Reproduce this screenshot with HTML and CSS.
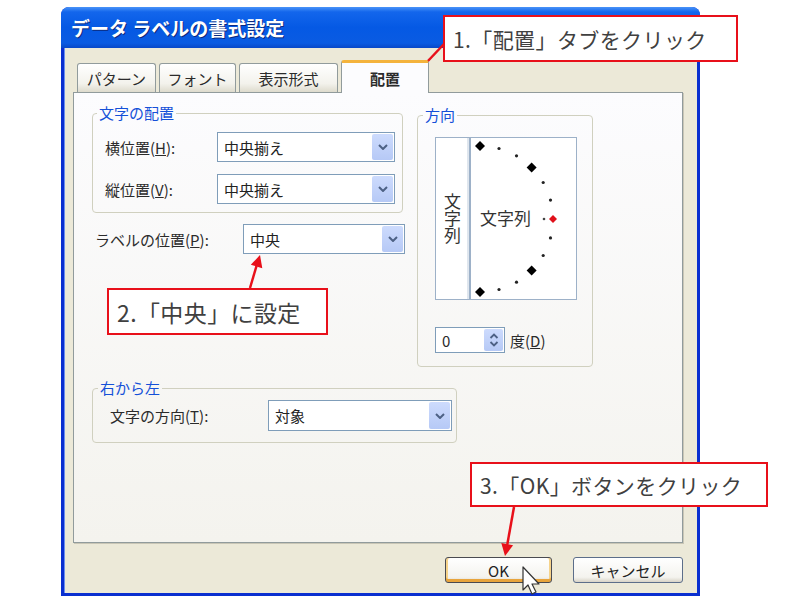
FILE: index.html
```html
<!DOCTYPE html>
<html lang="ja">
<head>
    <meta charset="UTF-8">
    <meta name="viewport" content="width=device-width, initial-scale=1.0">
    <title>データ ラベルの書式設定</title>
    <link rel="stylesheet" href="styles.css">
</head>
<body>
    <div class="stage">
        <div class="window">
            <div class="titlebar">データ ラベルの書式設定</div>

            <div class="window-body">
                <div class="tabs">
                    <div class="tab tab-pattern">パターン</div>
                    <div class="tab tab-font">フォント</div>
                    <div class="tab tab-format">表示形式</div>
                    <div class="tab tab-align active">配置</div>
                </div>

                <div class="panel">
                    <div class="left-col">
                        <fieldset class="group group-align">
                            <legend>文字の配置</legend>
                            <div class="group-body">
                                <div class="field">
                                    <label>横位置(<u>H</u>):</label>
                                    <div class="combo combo-align">
                                        <span>中央揃え</span>
                                        <span class="drop"><svg width="10" height="6" viewBox="0 0 10 6"><path d="M1 1 L5 5 L9 1" fill="none" stroke="#4d6185" stroke-width="2"/></svg></span>
                                    </div>
                                </div>
                                <div class="field">
                                    <label>縦位置(<u>V</u>):</label>
                                    <div class="combo combo-align">
                                        <span>中央揃え</span>
                                        <span class="drop"><svg width="10" height="6" viewBox="0 0 10 6"><path d="M1 1 L5 5 L9 1" fill="none" stroke="#4d6185" stroke-width="2"/></svg></span>
                                    </div>
                                </div>
                            </div>
                        </fieldset>

                        <div class="field label-pos">
                            <label>ラベルの位置(<u>P</u>):</label>
                            <div class="combo combo-pos">
                                <span>中央</span>
                                <span class="drop"><svg width="10" height="6" viewBox="0 0 10 6"><path d="M1 1 L5 5 L9 1" fill="none" stroke="#4d6185" stroke-width="2"/></svg></span>
                            </div>
                        </div>
                    </div>

                    <fieldset class="group group-dir">
                        <legend>方向</legend>
                        <div class="group-body">
                            <div class="dial">
                                <div class="dial-vertical">文字列</div>
                                <div class="dial-arc">
                                    <svg width="105" height="161" viewBox="0 0 105 161">
                                        <polygon points="9,3 14,8 9,13 4,8" fill="#000"/>
                                        <circle cx="28" cy="10.5" r="1.6" fill="#222"/>
                                        <circle cx="45.5" cy="17.8" r="1.6" fill="#222"/>
                                        <polygon points="60.6,24.4 65.6,29.4 60.6,34.4 55.6,29.4" fill="#000"/>
                                        <circle cx="72.2" cy="44.5" r="1.6" fill="#222"/>
                                        <circle cx="79.5" cy="62.1" r="1.6" fill="#222"/>
                                        <circle cx="73" cy="81" r="1.3" fill="#444"/>
                                        <polygon points="82,77 86,81 82,85 78,81" fill="#e0101a"/>
                                        <circle cx="79.5" cy="99.9" r="1.6" fill="#222"/>
                                        <circle cx="72.2" cy="117.5" r="1.6" fill="#222"/>
                                        <polygon points="60.6,127.6 65.6,132.6 60.6,137.6 55.6,132.6" fill="#000"/>
                                        <circle cx="45.5" cy="144.2" r="1.6" fill="#222"/>
                                        <circle cx="28" cy="151.5" r="1.6" fill="#222"/>
                                        <polygon points="9,149 14,154 9,159 4,154" fill="#000"/>
                                        <text x="9" y="87" class="dial-text">文字列</text>
                                    </svg>
                                </div>
                            </div>
                            <div class="spin-row">
                                <div class="spin">
                                    <span>0</span>
                                    <span class="spin-btn">
                                        <svg width="10" height="18" viewBox="0 0 10 18"><path d="M1.5 7 L5 3.5 L8.5 7 M1.5 11 L5 14.5 L8.5 11" fill="none" stroke="#4d6185" stroke-width="1.8"/></svg>
                                    </span>
                                </div>
                                <span class="spin-label">度(<u>D</u>)</span>
                            </div>
                        </div>
                    </fieldset>

                    <fieldset class="group group-rtl">
                        <legend>右から左</legend>
                        <div class="group-body">
                            <div class="field">
                                <label>文字の方向(<u>T</u>):</label>
                                <div class="combo combo-rtl">
                                    <span>対象</span>
                                    <span class="drop"><svg width="10" height="6" viewBox="0 0 10 6"><path d="M1 1 L5 5 L9 1" fill="none" stroke="#4d6185" stroke-width="2"/></svg></span>
                                </div>
                            </div>
                        </div>
                    </fieldset>
                </div>

                <div class="buttons">
                    <button class="btn btn-ok">OK</button>
                    <button class="btn btn-cancel">キャンセル</button>
                </div>
            </div>
        </div>

        <!-- 説明の吹き出し -->
        <div class="callout callout-1">1.「配置」タブをクリック</div>
        <div class="callout callout-2">2.「中央」に設定</div>
        <div class="callout callout-3">3.「OK」ボタンをクリック</div>

        <svg class="overlay" width="800" height="600" viewBox="0 0 800 600">
            <line x1="444" y1="44" x2="410" y2="80" stroke="#e8101a" stroke-width="2.5"/>
            <polygon points="402,88 414.6,83.4 406,75.2" fill="#e8101a"/>
            <line x1="250" y1="288" x2="256.5" y2="266" stroke="#e8101a" stroke-width="2.5"/>
            <polygon points="260,255 262.3,268.2 250.8,264.8" fill="#e8101a"/>
            <line x1="514" y1="507" x2="507.2" y2="545" stroke="#e8101a" stroke-width="2.5"/>
            <polygon points="505,556 513.1,545.3 501.3,543.1" fill="#e8101a"/>
            <path d="M523 567 L523 590 L528 585 L532 594 L536 592 L532 584 L539 584 Z" fill="#fff" stroke="#333" stroke-width="1.2" stroke-linejoin="round"/>
        </svg>
    </div>
</body>
</html>
```

FILE: styles.css
```css
body {
    margin: 0;
    background: #fff;
    font-family: "Noto Sans CJK JP", "Noto Sans", sans-serif;
    color: #2b2b2b;
}

.stage {
    position: relative;
    width: 800px;
    height: 600px;
    overflow: hidden;
}

/* ウィンドウ枠 */
.window {
    margin: 7px 0 0 61px;
    width: 639px;
    height: 589px;
    box-sizing: border-box;
    display: flex;
    flex-direction: column;
    background: #0a2fd0;
    border-radius: 8px 8px 0 0;
    overflow: hidden;
}

.titlebar {
    height: 41px;
    flex-shrink: 0;
    padding-left: 10px;
    display: flex;
    align-items: center;
    background: linear-gradient(#4a94f8 0, #1366ec 12%, #0559e4 50%, #0a5be2 88%, #0848c8 100%);
    color: #fff;
    font-size: 19px;
    font-weight: bold;
    text-shadow: 1px 1px 0 #0a2a80;
}

.window-body {
    flex: 1;
    margin: 0 3px 3px;
    padding: 12px 0 0 9px;
    background: #ece9d8;
    box-shadow: inset 1px 0 0 #6b8ff0;
}

/* タブ */
.tabs {
    display: flex;
    align-items: flex-end;
    gap: 3px;
    height: 33px;
    margin: 0 0 -1px 4px;
    position: relative;
    z-index: 1;
}

.tab {
    height: 29px;
    margin-bottom: 1px;
    box-sizing: border-box;
    display: flex;
    align-items: center;
    justify-content: center;
    border: 1px solid #919b9c;
    border-bottom: none;
    border-radius: 3px 3px 0 0;
    background: linear-gradient(#fff, #f3f2ec 70%, #dedbcd);
    font-size: 15px;
    color: #2b2b2b;
}

.tab-pattern { width: 79px; }
.tab-font { width: 77px; }
.tab-format { width: 99px; }
.tab-align { width: 88px; }

.tab.active {
    height: 33px;
    margin-bottom: 0;
    border-top: 3px solid #f4b33c;
    background: #fcfcfe;
    font-weight: bold;
}

.panel {
    width: 610px;
    height: 451px;
    box-sizing: border-box;
    border: 1px solid #919b9c;
    box-shadow: 1px 1px 0 #c9c6b6;
    background: linear-gradient(#fcfcfe, #f4f3ee);
    padding: 12px 0 0 18px;
    display: grid;
    grid-template-columns: 313px 176px;
    column-gap: 12px;
    row-gap: 13px;
    align-items: start;
    align-content: start;
}

/* グループ枠 */
.group {
    margin: 0;
    padding: 0;
    border: 1px solid #d0d0bf;
    border-radius: 4px;
    box-sizing: border-box;
    min-width: 0;
}

.group legend {
    margin-left: 4px;
    padding: 0 2px;
    font-size: 15px;
    line-height: 16px;
    color: #1450d8;
}

.group-align {
    width: 311px;
}

.group-align .group-body {
    padding: 11px 7px 8px 12px;
    display: flex;
    flex-direction: column;
    gap: 12px;
}

.field {
    display: flex;
    align-items: center;
    font-size: 15px;
}

.group-align label {
    width: 112px;
}

.label-pos {
    margin-top: 11px;
    padding-left: 3px;
}

.label-pos label {
    width: 148px;
}

/* コンボボックス */
.combo {
    height: 30px;
    box-sizing: border-box;
    display: flex;
    align-items: center;
    justify-content: space-between;
    padding-left: 6px;
    border: 1px solid #7f9db9;
    background: #fff;
    font-size: 15px;
    color: #222;
}

.combo-align { width: 178px; }
.combo-pos { width: 162px; }
.combo-rtl { width: 184px; height: 31px; }

.drop {
    width: 21px;
    align-self: stretch;
    margin: 1px;
    display: flex;
    align-items: center;
    justify-content: center;
    border-radius: 2px;
    background: linear-gradient(#cddbfd, #b6c9f6);
}

/* 方向 */
.group-dir {
    width: 176px;
    margin-top: 2px;
}

.group-dir legend {
    margin-left: 5px;
}

.group-dir .group-body {
    padding: 14px 0 13px 17px;
}

.dial {
    display: flex;
    height: 163px;
}

.dial-vertical {
    width: 35px;
    box-sizing: border-box;
    border: 1px solid #9db1c8;
    box-shadow: inset -2px 0 0 #dfe6ee;
    background: #fff;
    writing-mode: vertical-rl;
    display: flex;
    align-items: center;
    justify-content: center;
    font-size: 17px;
    color: #333;
}

.dial-arc {
    width: 107px;
    box-sizing: border-box;
    border: 1px solid #9db1c8;
    background: #fff;
}

.dial-arc svg {
    display: block;
}

.dial-text {
    font-family: "Noto Sans CJK JP", sans-serif;
    font-size: 17px;
    fill: #333;
}

.spin-row {
    margin-top: 27px;
    display: flex;
    align-items: center;
    font-size: 15px;
}

.spin {
    width: 70px;
    height: 26px;
    box-sizing: border-box;
    display: flex;
    align-items: center;
    justify-content: space-between;
    padding-left: 6px;
    border: 1px solid #7f9db9;
    background: #fff;
}

.spin-btn {
    width: 19px;
    align-self: stretch;
    margin: 1px;
    display: flex;
    align-items: center;
    justify-content: center;
    border-radius: 2px;
    background: linear-gradient(#cddbfd, #b6c9f6);
}

.spin-label {
    margin-left: 5px;
}

/* 右から左 */
.group-rtl {
    grid-column: 1 / -1;
    width: 365px;
}

.group-rtl legend {
    margin-left: 5px;
}

.group-rtl .group-body {
    padding: 4px 4px 11px 17px;
}

.group-rtl label {
    width: 158px;
}

/* ボタン */
.buttons {
    width: 610px;
    margin-top: 14px;
    display: flex;
    justify-content: flex-end;
    gap: 21px;
}

.btn {
    height: 26px;
    padding: 0;
    border: 1px solid #5c6e8a;
    border-radius: 3px;
    background: linear-gradient(#fff, #f4f3ee 80%, #d8d3c7);
    font-family: "Noto Sans CJK JP", sans-serif;
    font-size: 15px;
    color: #222;
}

.btn-ok {
    width: 107px;
    border-color: #4a4a50;
    box-shadow: inset 0 -3px 0 #e8a43c, inset 2px 0 0 #f6d38a, inset -2px 0 0 #f6d38a;
}

.btn-cancel {
    width: 110px;
}

/* 吹き出し */
.callout {
    position: absolute;
    box-sizing: border-box;
    border: 2px solid #e8101a;
    background: #fff;
    display: flex;
    align-items: center;
    padding-left: 8px;
    font-size: 21px;
    letter-spacing: 0.4px;
    color: #404040;
    white-space: nowrap;
}

.callout-1 {
    left: 443px;
    top: 15px;
    width: 295px;
    height: 47px;
}

.callout-2 {
    left: 107px;
    top: 288px;
    width: 221px;
    height: 47px;
    font-size: 23px;
}

.callout-3 {
    left: 470px;
    top: 462px;
    width: 298px;
    height: 45px;
}

.overlay {
    position: absolute;
    left: 0;
    top: 0;
    pointer-events: none;
}
```
